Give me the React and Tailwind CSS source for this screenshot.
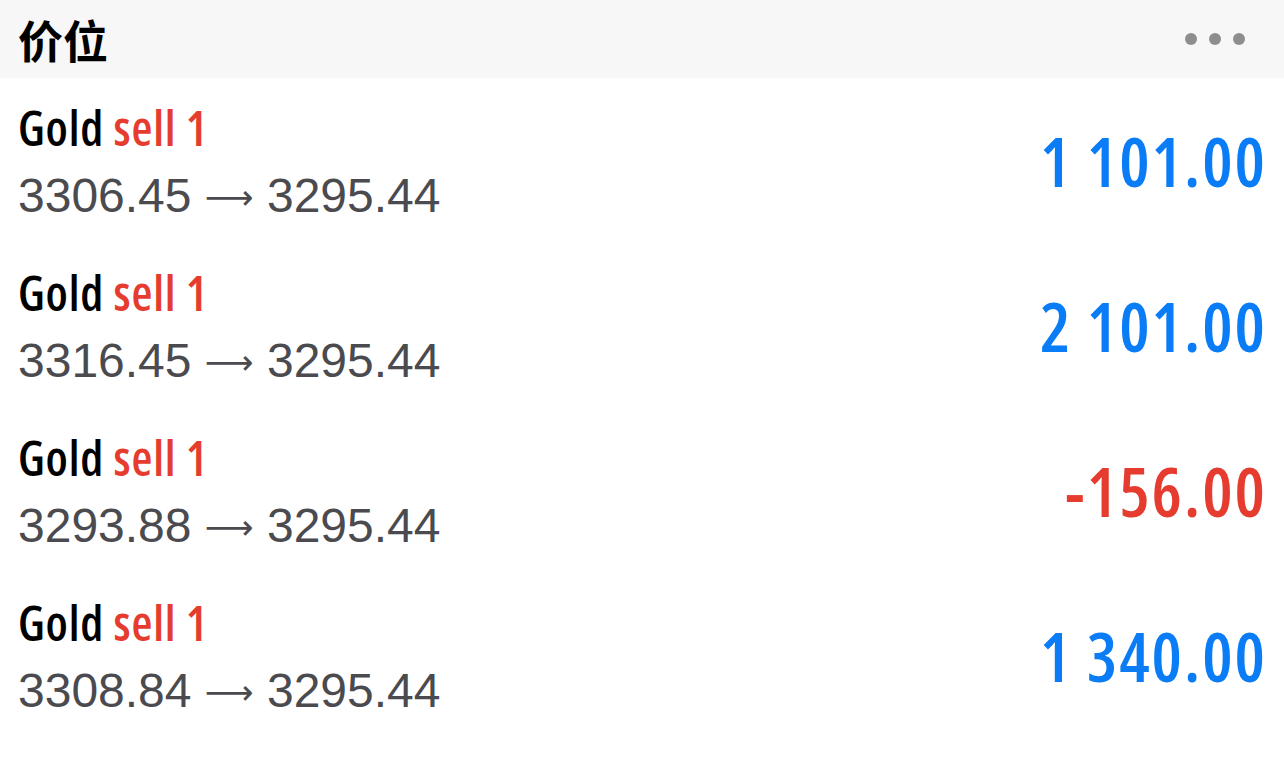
export default function App() {
  const rows = [
    { from: "3306.45", to: "3295.44", v: "1 101.00", pos: true },
    { from: "3316.45", to: "3295.44", v: "2 101.00", pos: true },
    { from: "3293.88", to: "3295.44", v: "-156.00", pos: false },
    { from: "3308.84", to: "3295.44", v: "1 340.00", pos: true },
  ];
  return (
    <div className="w-[1284px] h-[758px] bg-white overflow-hidden">
      <div className="h-[78px] bg-[#f7f7f7] flex items-center justify-between pl-[18px] pr-[39px]">
        <span className="text-[45px] font-bold text-black leading-none font-['Noto_Sans_CJK_SC',sans-serif]">价位</span>
        <div className="flex gap-[12px]">
          <span className="w-[12px] h-[12px] rounded-full bg-[#8e8e8e]"></span>
          <span className="w-[12px] h-[12px] rounded-full bg-[#8e8e8e]"></span>
          <span className="w-[12px] h-[12px] rounded-full bg-[#8e8e8e]"></span>
        </div>
      </div>
      {rows.map((r, i) => (
        <div key={i} className="h-[165px] flex items-center justify-between pl-[18px] pr-[19px]">
          <div className="flex flex-col">
            <div className="text-[48px] leading-[64px] font-semibold font-['Open_Sans',sans-serif] font-stretch-condensed tracking-[0.8px]">
              <span className="text-black">Gold</span>{" "}
              <span className="text-[#e53c2f]">sell 1</span>
            </div>
            <div className="mt-[8px] text-[48px] leading-[56px] text-[#4a4a4f] font-['Liberation_Sans',sans-serif] whitespace-nowrap">
              {r.from}{" "}
              <span className="text-[34px] align-[3px] font-['DejaVu_Sans',sans-serif]">⟶</span>{" "}
              {r.to}
            </div>
          </div>
          <div className={`-mr-[2px] text-[68px] leading-none font-semibold font-['Open_Sans',sans-serif] font-stretch-condensed tracking-[2px] ${r.pos ? "text-[#0a7cf5]" : "text-[#e53c2f]"}`}>
            {r.v}
          </div>
        </div>
      ))}
    </div>
  );
}
